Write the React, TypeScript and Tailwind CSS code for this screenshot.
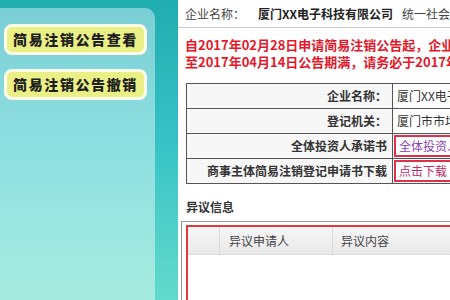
import React from 'react';

const cjk = { fontFamily: '"Noto Sans CJK SC", "Noto Sans", sans-serif' };

export default function App() {
  const rows = [
    { label: '企业名称：', value: '厦门XX电子科技有限公司', link: false },
    { label: '登记机关：', value: '厦门市市场监督管理局', link: false },
    { label: '全体投资人承诺书', value: '全体投资人承诺书', link: true, color: 'text-[#8a3fb5]' },
    { label: '商事主体简易注销登记申请书下载', value: '点击下载', link: true, color: 'text-[#b8306e]' },
  ];

  return (
    <div className="flex w-[450px] h-[300px] overflow-hidden bg-white" style={cjk}>
      {/* 左侧菜单 */}
      <div className="w-[178px] shrink-0 bg-gradient-to-b from-[#20adb0] via-[#38c4c6] to-[#62dacb]">
        <div className="w-[155px] h-[292px] mt-[8px] rounded-tr-[10px] bg-gradient-to-b from-[#7acfd5] via-[#8fe0e1] to-[#a6ebdf] pt-[16px] px-[4px] flex flex-col gap-[14px]">
          {['简易注销公告查看', '简易注销公告撤销'].map((t) => (
            <div
              key={t}
              className="h-[31px] w-[143px] rounded-[8px] border-[3px] border-[#fbfde8] bg-[#eaef86] flex items-center justify-center text-[14px] font-black text-[#1e1e1e] tracking-[1.6px]"
            >
              {t}
            </div>
          ))}
        </div>
      </div>

      {/* 右侧内容 */}
      <div className="flex-1 min-w-0 overflow-hidden">
        <div className="w-[520px]">
          <div className="h-[28px] border-b border-[#c8c8c8] flex items-center pl-[7px] text-[12px] text-[#444] whitespace-nowrap">
            <span className="w-[73px]">企业名称：</span>
            <span className="font-bold text-[#222] w-[144px]">厦门XX电子科技有限公司</span>
            <span>统一社会信用代码</span>
          </div>

          <div className="pl-[7px] pt-[8px] text-[13px] leading-[17px] font-bold text-[#e4182a] whitespace-nowrap">
            <p>自2017年02月28日申请简易注销公告起，企业在公告期内</p>
            <p>至2017年04月14日公告期满，请务必于2017年04月14日前</p>
          </div>

          <table className="ml-[8px] mt-[13px] border-collapse text-[12px] text-[#333]">
            <tbody>
              {rows.map((r) => (
                <tr key={r.label} className="h-[25px]">
                  <td className="w-[206px] border border-[#555] bg-[#f7f7f7] text-right pr-[5px] font-bold whitespace-nowrap">
                    {r.label}
                  </td>
                  <td className="w-[200px] border border-[#555] bg-white p-0 whitespace-nowrap">
                    {r.link ? (
                      <div className={`h-[22px] mx-[1px] border-2 border-[#e0304a] flex items-center pl-[3px] ${r.color}`}>
                        {r.value}
                      </div>
                    ) : (
                      <div className="pl-[4px]">{r.value}</div>
                    )}
                  </td>
                </tr>
              ))}
            </tbody>
          </table>

          <div className="pl-[8px] pt-[14px] text-[12px] font-bold text-[#333]">异议信息</div>

          <div className="ml-[3px] mt-[5px] border border-[#9a9a9a] pt-[3px] pl-[4px] h-[100px]">
            <div className="border-2 border-[#e23a3a] h-[100px]">
              <div className="h-[28px] flex text-[12px] text-[#444] bg-gradient-to-b from-[#f6f6f6] to-[#e9e9e9] border-b border-[#dcdcdc]">
                <div className="w-[32px] border-r border-[#dcdcdc]" />
                <div className="w-[113px] border-r border-[#dcdcdc] flex items-center pl-[9px]">异议申请人</div>
                <div className="flex items-center pl-[8px]">异议内容</div>
              </div>
            </div>
          </div>
        </div>
      </div>
    </div>
  );
}
